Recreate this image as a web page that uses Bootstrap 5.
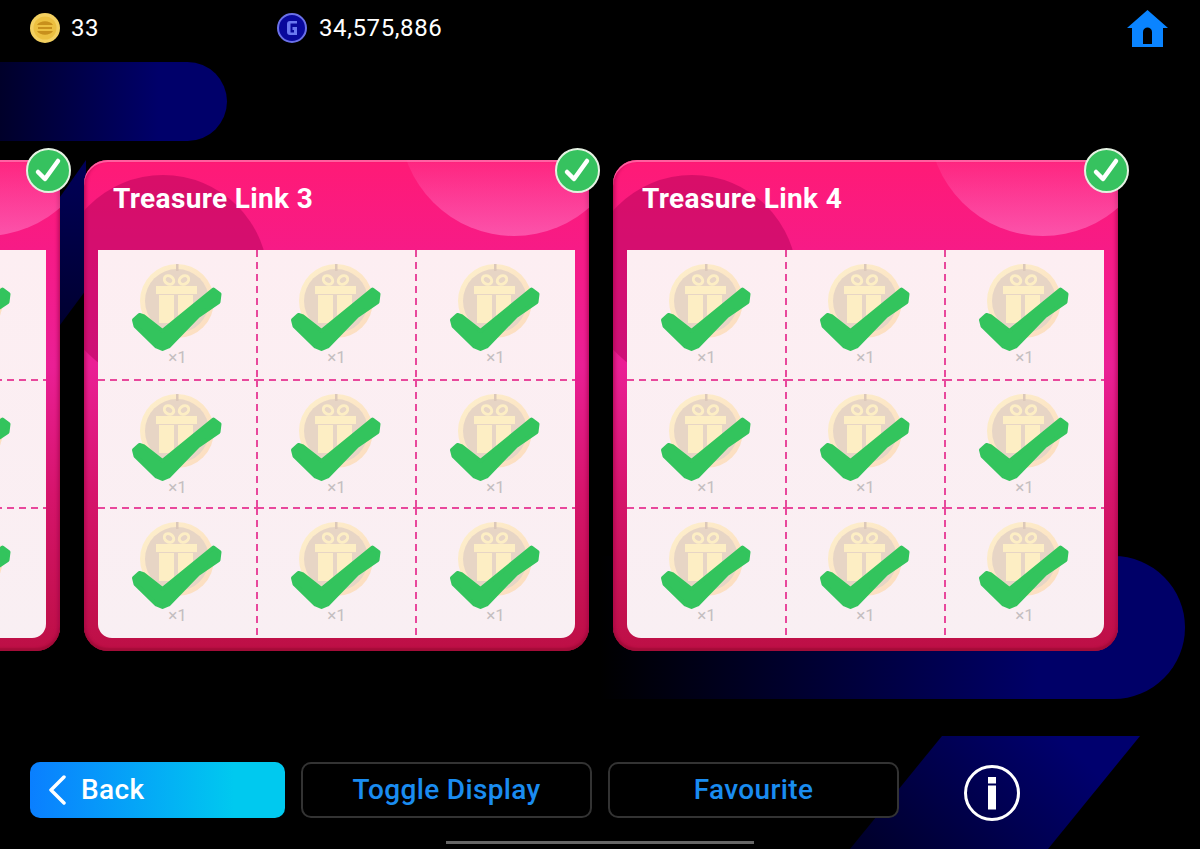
<!DOCTYPE html>
<html lang="en">
<head>
    <meta charset="UTF-8">
    <title>Treasure Link</title>
    <link href="https://cdn.jsdelivr.net/npm/bootstrap@5.3.0/dist/css/bootstrap.min.css" rel="stylesheet">
    <style>
        body { background: #000; height: 849px; overflow: hidden; font-family: Roboto, "Liberation Sans", sans-serif; }
        .stage { height: 849px; overflow: hidden; }

        /* background shapes */
        .deco { position: absolute; }
        .deco-pill-top { left: 0; top: 62px; width: 227px; height: 79px; border-radius: 0 40px 40px 0; background: linear-gradient(90deg, #00002a, #00006a 70%); }
        .deco-pill-low { left: 600px; top: 556px; width: 585px; height: 143px; border-radius: 0 72px 72px 0; background: linear-gradient(90deg, #000, #000068 75%); }
        .deco-slant { left: 850px; top: 736px; width: 290px; height: 113px; clip-path: polygon(92px 0, 290px 0, 198px 113px, 0 113px); background: linear-gradient(45deg, #000028, #00006e 80%); }
        .deco-wedge { left: 60px; top: 160px; width: 26px; height: 165px; clip-path: polygon(100% 0, 100% 130px, 0 165px, 0 37px); background: linear-gradient(180deg, #000058, #000030); }

        .top-strip { height: 56px; padding: 0 32px 0 30px; color: #fff; font-size: 24px; letter-spacing: .6px; z-index: 2; }
        .amount { width: 247px; gap: 11px; }
        .amount-wide { gap: 12px; }

        .card-row { margin: 104px 0 0 -445px; gap: 24px; z-index: 2; }
        .link-card { width: 505px; height: 491px; flex: none; border-radius: 24px; background: linear-gradient(180deg, #ff1a76 0%, #f61b88 20%, #ea1f95 42%, #d6146c 68%, #bd0f45 100%); box-shadow: inset 0 2px 0 #ff5f9f, inset 0 -3px 2px #a30c38, inset 3px 0 3px rgba(150, 0, 70, .35), inset -3px 0 3px rgba(150, 0, 70, .35); }
        .card-clip { position: absolute; inset: 0; border-radius: 24px; overflow: hidden; }
        .blob-dark { position: absolute; left: -26px; top: 15px; width: 210px; height: 210px; border-radius: 50%; background: rgba(170, 0, 85, .45); }
        .blob-light { position: absolute; left: 316px; top: -152px; width: 228px; height: 228px; border-radius: 50%; background: linear-gradient(180deg, rgba(255, 110, 190, .02) 60%, rgba(255, 120, 195, .6)); }
        .card-title { position: absolute; left: 29px; top: 21px; font-size: 28px; line-height: 36px; letter-spacing: .35px; font-weight: 700; color: #fff; margin: 0; }
        .done-badge { position: absolute; right: -11px; top: -12px; width: 45px; height: 45px; z-index: 3; }
        .prize-panel { position: absolute; left: 14px; top: 90px; width: 477px; height: 388px; border-radius: 0 0 14px 14px; overflow: hidden; background: linear-gradient(180deg, #fdeef2, #f9eff3); }
        .prize-cell { position: relative; height: 130px; padding-top: 12px; text-align: center; }
        .prize-cell:nth-child(n+4):nth-child(-n+6) { height: 128px; }
        /* dashed separators sit on the cell edges */
        .prize-cell::before { content: ""; position: absolute; left: 0; right: 0; bottom: -1px; height: 2px; background: repeating-linear-gradient(90deg, #e8489c 0 7px, transparent 7px 12px); }
        .prize-cell::after { content: ""; position: absolute; top: 0; bottom: 0; right: -1px; width: 2px; background: repeating-linear-gradient(180deg, #e8489c 0 7px, transparent 7px 12px); z-index: 1; }
        .prize-cell:nth-child(n+7)::before { display: none; }
        .prize-cell:nth-child(3n)::after { display: none; }
        .prize-icon { display: block; width: 96px; height: 90px; margin: 0 auto -4px; }
        .prize-qty { display: block; font-size: 17px; line-height: 18px; color: #c4bec0; }

        .action-strip { margin-top: 111px; padding-left: 30px; gap: 16px; z-index: 2; }
        .game-btn { height: 56px; padding: 0; border-radius: 10px; font-size: 28px; font-weight: 500; line-height: 1; letter-spacing: .35px; }
        .btn-back { width: 255px; justify-content: flex-start; gap: 14px; padding-left: 17px; color: #fff; background: linear-gradient(90deg, #0a7fff, #00c9ef 80%); border: 0; }
        .btn-plain { width: 291px; color: #1a8cf0; background: #000; border: 2px solid #333; }
        .info-icon { margin-left: 49px; margin-top: 3px; }
        .home-bar { position: absolute; left: 446px; top: 841px; width: 308px; height: 3px; background: #666; z-index: 3; }
    </style>
</head>
<body>
    <svg width="0" height="0" class="position-absolute">
        <defs>
            <linearGradient id="coinRim" x1="0" y1="0" x2="1" y2="1">
                <stop offset="0" stop-color="#fdf0cc"/>
                <stop offset="1" stop-color="#fcdcc0"/>
            </linearGradient>
        </defs>
        <symbol id="prize" viewBox="0 0 96 90">
            <circle cx="48" cy="39" r="37" fill="url(#coinRim)"/>
            <circle cx="48" cy="39" r="32" fill="#e7d5c5"/>
            <rect x="47" y="2" width="2.500" height="7" fill="#dcc8ba"/>
            <ellipse cx="40" cy="18" rx="5" ry="4" transform="rotate(35 40 18)" fill="none" stroke="#fdeec4" stroke-width="3"/>
            <ellipse cx="55" cy="18" rx="5" ry="4" transform="rotate(-35 55 18)" fill="none" stroke="#fdeec4" stroke-width="3"/>
            <rect x="27" y="24" width="41" height="8" fill="#fdeec4"/>
            <path d="M30 33h15v28H30zM49 33h15v28H49z" fill="#fdeec4"/>
            <path d="M5 58 10.500 53 15 54.500 33.500 69 84.500 27.500 90.500 32 89.500 40 69 54 39.500 84.500 33.500 87 27.500 84.500 6.500 64Z" fill="#33c45d" stroke="#33c45d" stroke-width="4" stroke-linejoin="round"/>
        </symbol>
    </svg>

    <div class="stage position-relative">
        <div class="deco deco-pill-top"></div>
        <div class="deco deco-pill-low"></div>
        <div class="deco deco-slant"></div>
        <div class="deco deco-wedge"></div>

        <div class="top-strip d-flex align-items-center position-relative">
            <div class="amount d-flex align-items-center">
                <svg width="30" height="30" viewBox="0 0 30 30">
                    <circle cx="15" cy="15" r="15" fill="#f3d060"/>
                    <circle cx="15" cy="15" r="11.500" fill="#ecc040"/>
                    <path d="M7 12C10 7 20 7 23 12ZM7 18C10 23 20 23 23 18Z" fill="#c8901c"/>
                    <rect x="8" y="14" width="14" height="2" fill="#c8901c"/>
                </svg>
                <span>33</span>
            </div>
            <div class="amount-wide d-flex align-items-center">
                <svg width="30" height="30" viewBox="0 0 30 30">
                    <circle cx="15" cy="15" r="14" fill="#08089c" stroke="#6a70e8" stroke-width="2"/>
                    <path d="M20 8H13C11 8 10 9 10 11V19C10 21 11 22 13 22H20V14H15.500V17H17V19.500H13.500V10.500H20Z" fill="#6a78f0"/>
                </svg>
                <span>34,575,886</span>
            </div>
            <svg class="ms-auto" width="41" height="37" viewBox="0 0 41 37">
                <path fill-rule="evenodd" d="M20.500 0 41 18H36V37H5V18H0ZM16 34H25V22C25 16 16 16 16 22Z" fill="#0a84ff"/>
            </svg>
        </div>

        <div class="card-row d-flex position-relative" id="cardRow"></div>

        <div class="action-strip d-flex align-items-start position-relative">
            <button type="button" class="btn game-btn btn-back d-flex align-items-center">
                <svg width="20" height="30" viewBox="0 0 20 30"><path d="M17 2 4 15 17 28" fill="none" stroke="#fff" stroke-width="3.500" stroke-linecap="round" stroke-linejoin="round"/></svg>
                <span>Back</span>
            </button>
            <button type="button" class="btn game-btn btn-plain">Toggle Display</button>
            <button type="button" class="btn game-btn btn-plain">Favourite</button>
            <svg class="info-icon" width="56" height="56" viewBox="0 0 56 56">
                <circle cx="28" cy="28" r="26.500" fill="none" stroke="#fff" stroke-width="3"/>
                <rect x="24" y="12" width="8" height="6.500" fill="#fff"/>
                <rect x="24" y="20.500" width="8" height="24" fill="#fff"/>
            </svg>
        </div>
        <div class="home-bar"></div>
    </div>

    <script>
        const cardRow = document.getElementById('cardRow');
        const cell = '<div class="col-4 prize-cell"><svg class="prize-icon"><use href="#prize"/></svg><span class="prize-qty">×1</span></div>';

        [2, 3, 4].forEach((n) => {
            cardRow.insertAdjacentHTML('beforeend', `
                <div class="link-card position-relative">
                    <div class="card-clip"><div class="blob-dark"></div><div class="blob-light"></div></div>
                    <h3 class="card-title">Treasure Link ${n}</h3>
                    <div class="prize-panel"><div class="row g-0">${cell.repeat(9)}</div></div>
                    <svg class="done-badge" viewBox="0 0 45 45">
                        <circle cx="22.500" cy="22.500" r="21.500" fill="#36c25f" stroke="#e4f2e2" stroke-width="2"/>
                        <path d="M12 24 19 31 32 13" fill="none" stroke="#fff" stroke-width="4.500" stroke-linecap="round" stroke-linejoin="round"/>
                    </svg>
                </div>`);
        });
    </script>
    <script src="https://cdn.jsdelivr.net/npm/bootstrap@5.3.0/dist/js/bootstrap.bundle.min.js"></script>
</body>
</html>
